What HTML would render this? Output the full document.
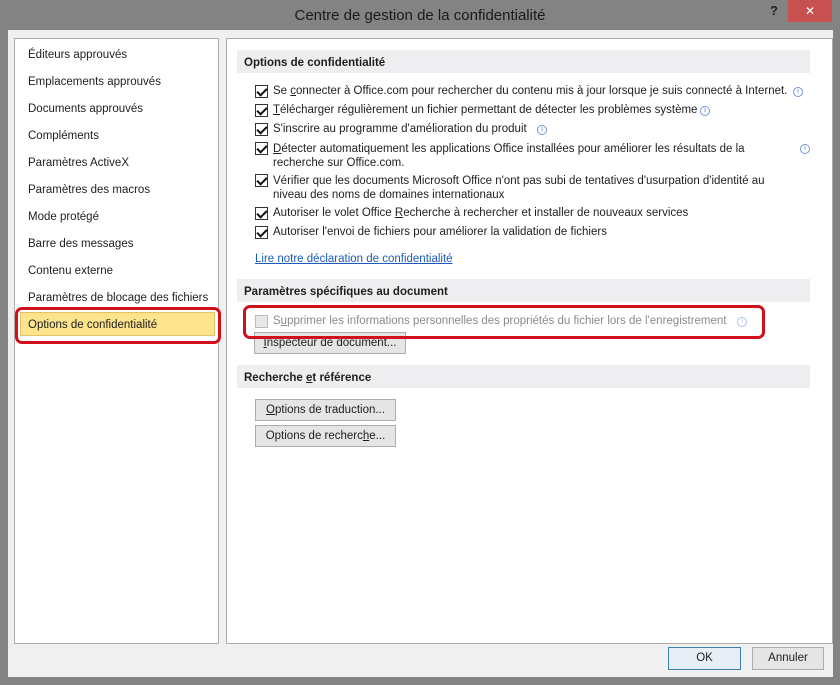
<!DOCTYPE html>
<html><head><meta charset="utf-8"><style>
*{margin:0;padding:0;box-sizing:border-box}
body{width:840px;height:685px;background:#838383;font-family:"Liberation Sans",sans-serif;font-size:11.5px;color:#1e1e1e;position:relative;overflow:hidden}
.a{position:absolute;white-space:nowrap}
#title{left:0;top:0;width:840px;height:30px;line-height:31px;text-align:center;font-size:15px;color:#1a1a1a}
#close{left:788px;top:0;width:44px;height:22px;background:#c75050;color:#fff;text-align:center;line-height:22px;font-size:12px}
#q{left:770px;top:3px;font-size:13px;color:#222;font-weight:bold}
#body{left:8px;top:30px;width:825px;height:647px;background:#f0f0f0}
.panel{background:#fff;border:1px solid #acacac}
.li{left:28px;font-size:11.5px;margin-top:2px}
.hdr{left:237px;width:573px;height:23px;background:#eeeef0;font-weight:bold;font-size:11.5px;padding:7px 0 0 7px}
.cb{width:13px;height:13px;border:1px solid #333;background:#fff;left:255px;margin-top:2px}
.cb::after{content:"";position:absolute;left:3px;top:0px;width:4px;height:8px;border:solid #111;border-width:0 2px 2px 0;transform:rotate(45deg)}
.t{left:273px;margin-top:2px}
.i{width:10px;height:10px;border:1px solid #6e9ad4;border-radius:50%;color:#4a78c0;font-size:7px;text-align:center;line-height:8px;margin-top:2px}
.btn{background:#e5e5e5;border:1px solid #acacac;text-align:center;font-size:11.5px;line-height:21px}
u{text-decoration:underline}
</style></head><body>
<div class="a" id="title">Centre de gestion de la confidentialité</div>
<div class="a" id="q">?</div>
<div class="a" id="close">✕</div>
<div class="a" id="body"></div>
<div class="a panel" style="left:14px;top:38px;width:205px;height:606px"></div>
<div class="a panel" style="left:226px;top:38px;width:607px;height:606px"></div>

<div class="a li" style="top:47px">Éditeurs approuvés</div>
<div class="a li" style="top:74px">Emplacements approuvés</div>
<div class="a li" style="top:101px">Documents approuvés</div>
<div class="a li" style="top:128px">Compléments</div>
<div class="a li" style="top:155px">Paramètres ActiveX</div>
<div class="a li" style="top:182px">Paramètres des macros</div>
<div class="a li" style="top:209px">Mode protégé</div>
<div class="a li" style="top:236px">Barre des messages</div>
<div class="a li" style="top:263px">Contenu externe</div>
<div class="a li" style="top:290px">Paramètres de blocage des fichiers</div>
<div class="a" style="left:20px;top:312px;width:195px;height:24px;background:#fce48d;border:1px solid #e3c164"></div>
<div class="a li" style="top:317px">Options de confidentialité</div>
<div class="a" style="left:15px;top:307px;width:206px;height:37px;border:3px solid #d0101a;border-radius:7px"></div>

<div class="a hdr" style="top:50px">Options de confidentialité</div>
<div class="a cb" style="top:83px"></div><div class="a t" style="top:83px">Se <u>c</u>onnecter à Office.com pour rechercher du contenu mis à jour lorsque je suis connecté à Internet.</div><div class="a i" style="left:793px;top:85px">i</div>
<div class="a cb" style="top:102px"></div><div class="a t" style="top:102px"><u>T</u>élécharger régulièrement un fichier permettant de détecter les problèmes système</div><div class="a i" style="left:700px;top:104px">i</div>
<div class="a cb" style="top:121px"></div><div class="a t" style="top:121px">S'inscrire au pro<u>g</u>ramme d'amélioration du produit</div><div class="a i" style="left:537px;top:123px">i</div>
<div class="a cb" style="top:140px"></div><div class="a t" style="top:140px;line-height:14px"><u>D</u>étecter automatiquement les applications Office installées pour améliorer les résultats de la<br>recherche sur Office.com.</div><div class="a i" style="left:800px;top:142px">i</div>
<div class="a cb" style="top:172px"></div><div class="a t" style="top:172px;line-height:14px">Vérifier que les documents Microsoft Office n'ont pas subi de tentatives d'usurpation d'identité au<br>niveau des noms de domaines internationaux</div>
<div class="a cb" style="top:205px"></div><div class="a t" style="top:205px">Autoriser le volet Office <u>R</u>echerche à rechercher et installer de nouveaux services</div>
<div class="a cb" style="top:224px"></div><div class="a t" style="top:224px">Autoriser l'envoi de fichiers pour améliorer la validation de fichiers</div>
<div class="a" style="left:255px;top:253px;color:#1a5cb8;text-decoration:underline">Lire notre déclaration de confidentialité</div>

<div class="a hdr" style="top:279px">Paramètres spécifiques au document</div>
<div class="a" style="left:255px;top:315px;width:13px;height:13px;border:1px solid #bbb;background:#e8e8e8"></div>
<div class="a t" style="top:313px;color:#8a8a8a">S<u>u</u>pprimer les informations personnelles des propriétés du fichier lors de l'enregistrement</div><div class="a i" style="left:737px;top:315px;opacity:.6">i</div>
<div class="a btn" style="left:254px;top:332px;width:152px;height:22px"><u>I</u>nspecteur de document...</div>
<div class="a" style="left:243px;top:305px;width:522px;height:34px;border:3px solid #d0101a;border-radius:7px"></div>

<div class="a hdr" style="top:365px">Recherche <u>e</u>t référence</div>
<div class="a btn" style="left:255px;top:399px;width:141px;height:22px"><u>O</u>ptions de traduction...</div>
<div class="a btn" style="left:255px;top:425px;width:141px;height:22px">Options de recherc<u>h</u>e...</div>

<div class="a btn" style="left:668px;top:647px;width:73px;height:23px;border-color:#3c7fb1;background:#e7eef6">OK</div>
<div class="a btn" style="left:752px;top:647px;width:72px;height:23px">Annuler</div>
</body></html>
